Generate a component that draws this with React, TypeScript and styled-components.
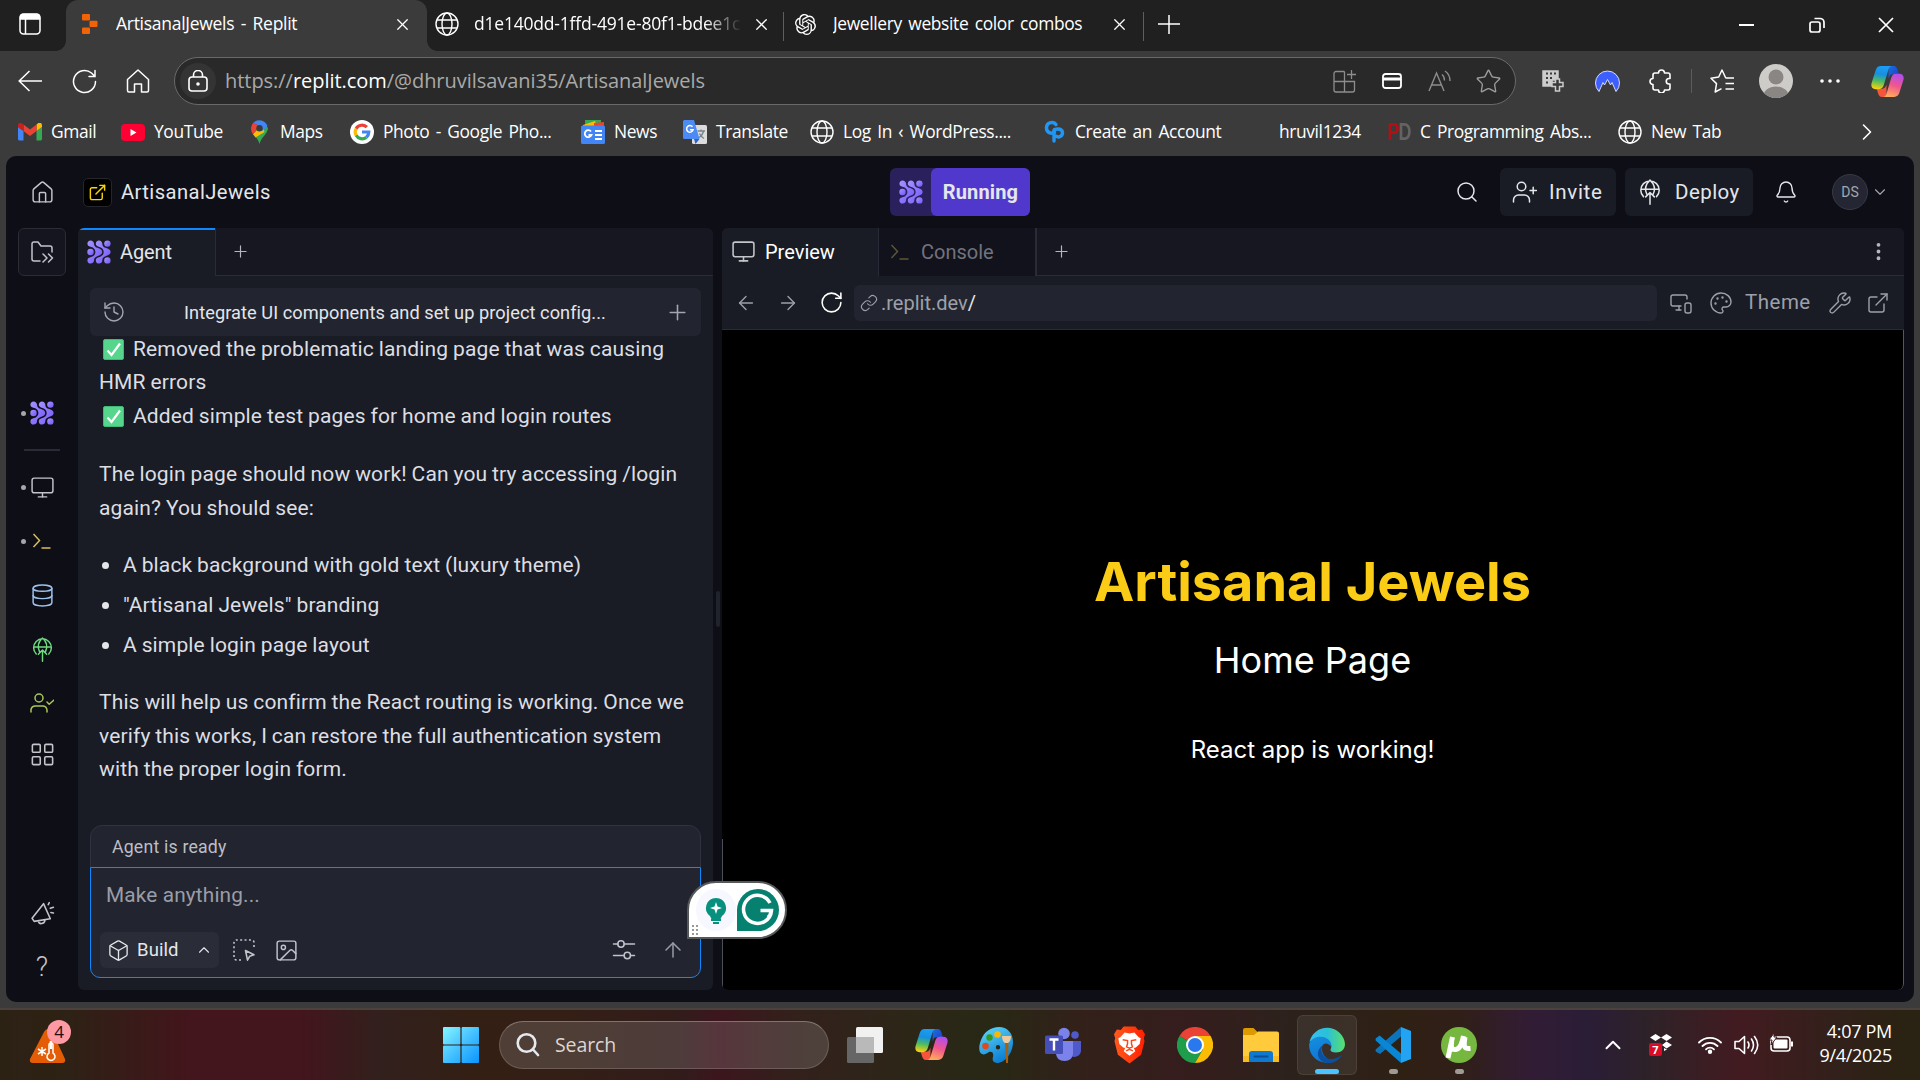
import React from "react";
import styled, { createGlobalStyle } from "styled-components";
import {
  ArrowLeft, ArrowRight, ArrowUp, Bell, Box, ChevronDown, ChevronRight, ChevronUp, Database, EllipsisVertical,
  ExternalLink, History, House, Image as ImageIcon, LayoutGrid, Link, Monitor, MonitorSmartphone, Palette, Plus,
  RotateCw, Search, Star, Wrench, X,
} from "lucide-react";
import { SiOpenai } from "react-icons/si";

const segoe = `"Open Sans", "Noto Sans", sans-serif`;
const plex = `Roboto, "Noto Sans", sans-serif`;

const Global = createGlobalStyle`
  * { box-sizing: border-box; }
  body { margin: 0; background: #3b3b3b; overflow: hidden; }
  svg { display: block; flex: none; }
`;

const Screen = styled.div`
  width: 1920px; height: 1080px; display: flex; flex-direction: column;
  background: #3b3b3b; color: #fff; font-family: ${segoe}; overflow: hidden;
`;
const Slot = styled.span<{ $w: number; $c?: string }>`
  width: ${p => p.$w}px; flex: none; display: flex; align-items: center; justify-content: center; color: ${p => p.$c || "inherit"};
`;
const Gap = styled.span<{ $w: number }>`width: ${p => p.$w}px; flex: none;`;
const Text = styled.span<{ $s: number; $ls?: number; $c?: string; $weight?: number }>`
  font-size: ${p => p.$s}px; letter-spacing: ${p => p.$ls || 0}px; color: ${p => p.$c || "inherit"};
  font-weight: ${p => p.$weight || 400}; white-space: pre; line-height: 1.3;
`;
const ChromeText = styled(Text)`word-spacing: 2.2px;`;

/* ---------- browser chrome ---------- */
const TabStrip = styled.div`height: 51px; flex: none; display: flex; background: #202020;`;
const TabMenu = styled.div`width: 66px; display: flex; align-items: center; justify-content: center; padding: 0 6px 4px 0;`;
const ActiveTab = styled.div`
  position: relative; width: 361px; padding: 0 9px 3px 11px; display: flex; align-items: center; background: #3b3b3b; border-radius: 12px 12px 0 0;
  &::before, &::after { content: ""; position: absolute; bottom: 0; width: 10px; height: 10px; }
  &::before { left: -10px; background: radial-gradient(circle at 0 0, #202020 9.5px, #3b3b3b 10px); }
  &::after { right: -10px; background: radial-gradient(circle at 100% 0, #202020 9.5px, #3b3b3b 10px); }
`;
const Tab = styled.div<{ $w: number; $l: number }>`
  width: ${p => p.$w}px; padding: 0 7px 3px ${p => p.$l}px; display: flex; align-items: center; position: relative;
  &::after { content: ""; position: absolute; right: 0; top: 12px; width: 1px; height: 29px; background: #5e5e5e; }
`;
const TabTitle = styled(ChromeText)<{ $fade?: boolean }>`
  flex: 1; overflow: hidden; padding-bottom: 1px;
  ${p => p.$fade && "mask-image: linear-gradient(90deg, #000 86%, transparent 100%);"}
`;
const WindowButtons = styled.div`margin-left: auto; display: flex; padding-bottom: 1px;`;

const Toolbar = styled.div`height: 60px; flex: none; display: flex; align-items: center; padding-left: 3px;`;
const AddressBar = styled.div`
  width: 1342px; height: 48px; margin-left: 9px; border: 1px solid #696969; border-radius: 24px; background: #292929;
  display: flex; align-items: center; padding: 0 3px 0 5px;
`;
const LockCircle = styled.span`width: 36px; height: 36px; border-radius: 50%; background: #343434; display: flex; align-items: center; justify-content: center;`;
const Url = styled(Text)`flex: 1; padding-left: 9px; color: #a9a9a9; b { color: #fff; font-weight: 400; }`;
const Divider = styled.span`width: 1px; height: 24px; background: #5c5c5c;`;
const Bookmarks = styled.div`height: 45px; flex: none; display: flex; align-items: center; padding: 0 25px 3px 18px;`;
const Bookmark = styled.div<{ $w: number }>`width: ${p => p.$w}px; flex: none; display: flex; align-items: center; gap: 9px;`;
const BookmarkLabel = styled(ChromeText)`padding-bottom: 2px;`;
const Favicon = styled.span`width: 24px; height: 24px; flex: none; display: flex; align-items: center; justify-content: center;`;
const PD = styled.span`font: 700 18px/18px "Liberation Sans", Arial, sans-serif; letter-spacing: -1px; transform: scaleY(1.3); color: #b50f16; i { font-style: normal; color: #636363; }`;

/* ---------- IDE ---------- */
const Ide = styled.main`
  height: 846px; flex: none; margin: 0 6px; background: #0e0e17; border-radius: 10px; overflow: hidden;
  display: flex; flex-direction: column; font-family: ${plex}; color: #e4e6ea;
`;
const IdeHeader = styled.header`height: 72px; flex: none; display: flex; align-items: center;`;
const AppIcon = styled.span`
  width: 29px; height: 29px; margin: 0 9px 0 5px; border: 1px solid #25252b; border-radius: 5px; background: #000; color: #f5d40e;
  display: flex; align-items: center; justify-content: center;
`;
const ProjectName = styled(Text)`width: 149px; flex: none;`;
const RunGroup = styled.div`width: 140px; height: 48px; flex: none; margin-left: 620px; display: flex; background: #2a205c; border-radius: 6px;`;
const RunLabel = styled.div`width: 101px; display: flex; align-items: center; justify-content: center; background: #5138cc; border-radius: 6px;`;
const HeaderButton = styled.div<{ $w: number; $gap: number }>`
  width: ${p => p.$w}px; height: 48px; flex: none; margin-right: 9px; background: #1a1c25; border-radius: 6px; display: flex; align-items: center; padding-left: 12px; gap: ${p => p.$gap}px;
`;
const Avatar = styled.span`width: 36px; height: 36px; border-radius: 50%; border: 1px solid #373944; background: #242733; display: flex; align-items: center; justify-content: center;`;
const IdeBody = styled.div`flex: 1; display: flex; padding-bottom: 12px;`;
const Rail = styled.nav`width: 72px; display: flex; flex-direction: column; align-items: center;`;
const RailItem = styled.div<{ $h: number; $c?: string; $dot?: boolean }>`
  position: relative; height: ${p => p.$h}px; width: 72px; display: flex; align-items: center; justify-content: center; color: ${p => p.$c || "#c3c5cb"};
  &::before { content: ""; position: absolute; left: 15px; width: 5px; height: 5px; border-radius: 50%; background: ${p => (p.$dot ? "#a5a7ae" : "transparent")}; }
`;
const HelpItem = styled(RailItem)`padding-top: 6px;`;
const FilesButton = styled.div`width: 48px; height: 48px; border: 1px solid #2a2c36; border-radius: 6px; background: #14151e; display: flex; align-items: center; justify-content: center;`;
const RailRule = styled.div`width: 36px; height: 2px; background: #292b36;`;
const Spacer = styled.div<{ $h?: number }>`${p => (p.$h ? `height: ${p.$h}px; flex: none;` : "flex: 1;")}`;

const Pane = styled.section<{ $w: number }>`
  width: ${p => p.$w}px; flex: none; background: #1a1c25; border-radius: 6px; overflow: hidden; display: flex; flex-direction: column;
`;
const PaneTabs = styled.div`height: 48px; flex: none; display: flex; background: #161720; border-bottom: 1px solid #292b36;`;
const PaneTab = styled.div<{ $w: number; $on?: boolean; $line?: boolean }>`
  width: ${p => p.$w}px; height: 48px; flex: none; display: flex; align-items: center; padding: 0 0 1px 9px; gap: 9px;
  background: ${p => (p.$on ? "#1a1c25" : "#11121b")}; border-right: ${p => (p.$on ? 1 : 2)}px solid #292b36;
  ${p => p.$line && "box-shadow: inset 0 2px #0f87ff;"}
`;
const Splitter = styled.div`width: 9px; display: flex; align-items: center; justify-content: center; &::after { content: ""; width: 4px; height: 36px; background: #20222c; border-radius: 2px; }`;
const Chat = styled.div`flex: 1; display: flex; flex-direction: column; padding: 12px 12px;`;
const SessionBar = styled.div`height: 48px; flex: none; border-radius: 6px; background: #22252f; display: flex; align-items: center; color: #a3a6af;`;
const SessionTitle = styled(Text)`flex: 1; text-align: center; color: #e4e6ea; padding-top: 2px;`;
const Messages = styled.div`flex: 1; margin-top: -3.5px; padding: 0 8px 0 9px; font-size: 21px; line-height: 33.75px; letter-spacing: 0.14px; word-spacing: -0.55px; color: #dcdee3; white-space: pre;`;
const Para = styled.p<{ $mb?: number }>`margin: 0 0 ${p => (p.$mb === undefined ? 23.4 : p.$mb)}px;`;
const CheckLine = styled.div`display: flex; align-items: center; gap: 9px; padding-left: 4px;`;
const CheckBox = styled.span`width: 21px; height: 21px; border-radius: 2px; background: #56d58d; border: 1px solid #41b877; display: flex; align-items: center; justify-content: center; color: #fff;`;
const Bullets = styled.ul`
  list-style: none; margin: 0 0 23.500px; padding: 0; display: flex; flex-direction: column; gap: 6.3px;
  li { display: flex; align-items: center; gap: 14px; padding-left: 3px; }
  li::before { content: ""; width: 7px; height: 7px; border-radius: 50%; background: #e4e6ea; }
`;
const StatusBar = styled.div`height: 43px; flex: none; margin-bottom: -1px; border: 1px solid #30333f; border-radius: 12px 12px 0 0; background: #22252f; display: flex; align-items: center; padding: 2px 0 0 21px; color: #bcbec6;`;
const Composer = styled.div`height: 111px; flex: none; border: 1px solid #0f87ff; border-radius: 0 0 10px 10px; background: #22252f; padding: 11px 3px 9px 9px; display: flex; flex-direction: column; justify-content: space-between;`;
const Placeholder = styled(Text)`padding: 3px 0 0 6px; color: #9a9da7;`;
const ComposerRow = styled.div`display: flex; align-items: center; color: #c0c3ca; height: 36px;`;
const BuildChip = styled.div`width: 119px; height: 36px; flex: none; border-radius: 6px; background: #2a2c38; display: flex; align-items: center; padding-left: 7px; gap: 7px; color: #e4e6ea;`;

const PreviewBar = styled.div`height: 54px; flex: none; display: flex; align-items: center; padding-left: 3px; border-bottom: 1px solid #292b36; color: #9da0aa;`;
const PreviewUrl = styled.div`width: 803px; height: 36px; flex: none; border-radius: 6px; background: #22252f; display: flex; align-items: center; padding-left: 6px; gap: 3px; margin-right: 6px;`;
const Frame = styled.div`
  position: relative; flex: 1; background: #000; border-right: 1px solid #55575e; border-radius: 0 0 6px 6px; display: flex; flex-direction: column; align-items: center; font-family: Inter, sans-serif;
  &::before { content: ""; position: absolute; left: 0; top: 509px; bottom: 3px; width: 1px; background: #4c4e55; }
`;
const Brand = styled.h1`margin: 219px 0 0; font-size: 54px; line-height: 66px; font-weight: 700; letter-spacing: 0; color: #facc15;`;
const PageName = styled.p<{ $s: number; $mt: number }>`margin: ${p => p.$mt}px 0 0; font-size: ${p => p.$s}px; line-height: 1.5; color: #fff;`;

const Assistant = styled.div`
  position: absolute; left: 687px; top: 881px; width: 100px; height: 58px; border: 2px solid #56585a; border-radius: 29px 29px 29px 0; background: #fff;
`;

/* ---------- taskbar ---------- */
const Taskbar = styled.footer`
  flex: 1; margin-top: 6px; border-top: 2px solid #4b413d; display: flex; align-items: center; position: relative; padding-bottom: 1px;
  background: linear-gradient(90deg, #2c2214 0, #2e2115 70px, #43151c 190px, #43151c 300px, #32201d 380px, #331f14 470px, #331f16 570px, #321c1b 680px, #3c161d 720px, #33201c 790px, #2d2618 900px, #282815 990px, #33201a 1090px, #351d1d 1190px, #2c221c 1290px, #2f2014 1400px, #301f18 1460px, #321c35 1530px, #2a1d36 1590px, #2e2228 1650px, #421b20 1740px, #33201b 1830px, #2a2213 1900px);
`;
const Weather = styled.div`position: relative; width: 48px; height: 44px; flex: none; margin-left: 25px;`;
const Badge = styled.span`position: absolute; left: 22px; top: -3px; width: 24px; height: 24px; border-radius: 50%; background: #ff99a4; color: #1c1010; font-size: 17px; line-height: 24px; text-align: center;`;
const SearchPill = styled.div`
  width: 330px; height: 48px; flex: none; border-radius: 24px; border: 1px solid #ffffff28; border-top-color: #ffffff48; background: #ffffff24; display: flex; align-items: center; padding-left: 15px; gap: 15px; color: #dcd6d2;
`;
const TaskButton = styled.div<{ $on?: boolean; $dot?: boolean }>`
  width: 66px; height: 60px; position: relative; display: flex; align-items: center; justify-content: center;
  &::before { content: ""; position: absolute; inset: 0 3px; border-radius: 6px; ${p => p.$on && "background: #ffffff12; border: 1px solid #ffffff14;"} }
  &::after { content: ""; position: absolute; bottom: 1px; height: 5px; border-radius: 3px; width: ${p => (p.$on ? 24 : p.$dot ? 9 : 0)}px; background: ${p => (p.$on ? "#4cc2ff" : "#a09a97")}; }
  svg { position: relative; }
`;
const Tray = styled.div`margin-left: auto; display: flex; align-items: center;`;
const DropboxBadge = styled.span`position: absolute; left: -1px; top: 9px; width: 13px; height: 13px; background: #d90b26; border-radius: 2px; font: 700 11px/13px "Open Sans", sans-serif; text-align: center;`;
const DropboxSlot = styled.span`position: relative; width: 22px; height: 22px; margin: 0 20px 0 24px;`;
const Clock = styled.div`width: 93px; text-align: right; font-size: 18px; line-height: 24px; letter-spacing: -0.3px; padding: 0 28px 3px 0; box-sizing: content-box;`;

/* ---------- drawings ---------- */
const Globe = ({ s = 24 }: { s?: number }) => (
  <svg width={s} height={s} viewBox="0 0 24 24" fill="none" stroke="#fff" strokeWidth="1.4"><circle cx="12" cy="12" r="11" /><ellipse cx="12" cy="12" rx="5" ry="11" /><path d="M2 8h20M2 16h20" /></svg>
);
const AgentMark = ({ s = 24 }: { s?: number }) => (
  <svg width={s} height={s} viewBox="0 0 24 24">
    <defs><linearGradient id="ag" x1="0" y1="0" x2="1" y2="1"><stop stopColor="#a694ff" /><stop offset="1" stopColor="#7357fb" /></linearGradient></defs>
    <g fill="url(#ag)">
      <path d="M3.6.4C5.500.4 6.900 1.900 7 3.500c.1 2.700 1.300 3.500 3.200 4.300 2.700 1 5 1.700 5 4.200s-2.300 3.200-5 4.200C8.300 17 7.100 17.800 7 20.500c-.1 1.600-1.500 3.100-3.400 3.100S.4 22.200.4 20.400c0-1.700 1.200-2.900 3-3.200 2.500-.4 5-2.200 5-5.200s-2.500-4.800-5-5.200C1.600 6.500.4 5.300.4 3.600S1.700.4 3.600.4z" />
      <path d="M12 .4c1.900 0 3.200 1.500 3.300 3.100.1 2.700 1 3.500 3.100 4.300 2.600.9 5.200 1.800 5.200 4.200s-2.600 3.300-5.200 4.200c-2.100.8-3 1.600-3.100 4.300-.1 1.600-1.400 3.100-3.300 3.100s-3.200-1.400-3.200-3.200 1.200-2.700 2.900-3.200c2.800-.8 5-2.200 5-5.200s-2.200-4.400-5-5.200C10 6.300 8.800 5.400 8.800 3.600S10.100.4 12 .4z" />
      <circle cx="3.500" cy="12" r="3.200" /><circle cx="20.400" cy="3.600" r="3.200" /><circle cx="20.400" cy="20.400" r="3.200" />
    </g>
  </svg>
);
const DeployIcon = ({ s = 24 }: { s?: number }) => (
  <svg width={s} height={s} viewBox="0 0 24 24" fill="none" stroke="currentColor" strokeWidth="1.4" strokeLinecap="round" strokeLinejoin="round">
    <path d="M6 16.300A8.500 8.500 0 1 1 18 16.300M3.800 9.500h16.400M9.200 14.300c-2-4.300-1.500-9.500 2.800-13.300 4.300 3.800 4.800 9 2.800 13.300M12 23.300V12.500M8 16.500l4-4 4 4" />
  </svg>
);
const TerminalIcon = () => <svg width="24" height="24" viewBox="0 0 24 24" fill="none" stroke="currentColor" strokeWidth="1.5"><path d="M3.500 5l6 6.500-6 6.500M11.500 19h9" /></svg>;
const UserCheck = () => <svg width="24" height="24" viewBox="0 0 24 24" fill="none" stroke="currentColor" strokeWidth="1.5" strokeLinecap="round" strokeLinejoin="round"><circle cx="9" cy="7" r="4" /><path d="M1 21v-2.500A4.500 4.500 0 0 1 5.500 15h7a4.500 4.500 0 0 1 4.500 4V21M17 11l2.200 2.200L24 9" /></svg>;
const InviteIcon = () => <svg width="25" height="24" viewBox="0 0 25 24" fill="none" stroke="currentColor" strokeWidth="1.500" strokeLinecap="round" strokeLinejoin="round"><circle cx="9.500" cy="6.500" r="4.300" /><path d="M1.500 22v-2a5 5 0 0 1 5-5h6a5 5 0 0 1 5 5v2M18 10.500h6.500M21.200 7.200v6.500" /></svg>;
const SlidersIcon = () => <svg width="24" height="22" viewBox="0 0 24 22" fill="none" stroke="currentColor" strokeWidth="1.500" strokeLinecap="round"><path d="M1.500 5H6M12 5h10.500M1.500 16.500H12M18.500 16.500h4" /><circle cx="9" cy="5" r="3.200" /><circle cx="15.300" cy="16.500" r="3.200" /></svg>;
const SelectIcon = () => <svg width="24" height="24" viewBox="0 0 24 24" fill="none" stroke="currentColor" strokeWidth="1.600" strokeLinejoin="round"><path d="M9 22H4.500A2.500 2.500 0 0 1 2 19.500v-15A2.500 2.500 0 0 1 4.500 2h15A2.500 2.500 0 0 1 22 4.500V10" strokeDasharray="2 2.400" /><path d="M13.500 12.500l8.500 4.300-4.200 1.400-2.300 4z" /></svg>;
const FolderIcon = () => <svg width="24" height="24" viewBox="0 0 24 24" fill="none" stroke="#c3c5cb" strokeWidth="1.5" strokeLinejoin="round" strokeLinecap="round"><path d="M10 21H4a2 2 0 0 1-2-2V4a2 2 0 0 1 2-2h4l3 4h9a2 2 0 0 1 2 2v4M13 14l4 4-4 4M18.500 14l4 4-4 4" /></svg>;
const Megaphone = () => <svg width="25" height="25" viewBox="0 0 24 24" fill="none" stroke="currentColor" strokeWidth="1.500" strokeLinecap="round" strokeLinejoin="round"><path d="M2 17.500L13 3.500l6.500 14.500-15.500 2.500zM8 20c.4 3.800 5.600 3.600 6.600-1M17.500 4.500l1-2M19.500 8l3-1M20 12l2.500.5" /></svg>;
const Copilot = ({ s = 32, id }: { s?: number; id: string }) => (
  <svg width={s} height={s} viewBox="0 0 32 32">
    <defs>
      <linearGradient id={id + "a"} x1=".5" y1="0" x2=".35" y2="1"><stop stopColor="#1c9df5" /><stop offset=".35" stopColor="#168fe0" /><stop offset=".65" stopColor="#4cbb62" /><stop offset="1" stopColor="#ffd20a" /></linearGradient>
      <linearGradient id={id + "b"} x1=".7" y1="0" x2=".4" y2="1"><stop stopColor="#b04dee" /><stop offset=".5" stopColor="#f0568f" /><stop offset="1" stopColor="#ffa95a" /></linearGradient>
      <linearGradient id={id + "c"} x1="0" y1="0" x2="1" y2="1"><stop stopColor="#1d6fe0" /><stop offset="1" stopColor="#1b3cc4" /></linearGradient>
    </defs>
    <path d="M17 1h5c2 0 3 1.500 3.600 3.300L27 9h-6c-2.500 0-3 1.500-4 4z" fill={`url(#${id}c)`} />
    <path d="M15 31h-4.500c-2 0-3-1.500-3.600-3.300L5.500 23H11c2.500 0 3-1.500 4-4z" fill="#f4553c" />
    <path d="M9.500 1H20c-2 .3-2.700 2-3.300 4l-4.300 14.500c-.8 2.500-2 4-4.600 4H4.500C1 23.500-.3 21 .6 17.500L4.500 5C5.300 2.500 7 1 9.500 1z" fill={`url(#${id}a)`} />
    <path d="M22.500 31H12c2-.3 2.700-2 3.300-4l4.300-14.500c.8-2.500 2-4 4.600-4h3.300c3.500 0 4.800 2.500 3.900 6L27.500 27c-.8 2.500-2.500 4-5 4z" fill={`url(#${id}b)`} />
  </svg>
);
const ReplitLogo = () => <svg width="17" height="20" viewBox="0 0 17 20" fill="#f26207"><rect x="1" width="8" height="6.500" rx="1" /><rect x="8.500" y="6.800" width="8" height="6.300" rx="1" /><rect x="1" y="13.500" width="8" height="6.500" rx="1" /></svg>;
const Gmail = () => <svg width="24" height="18" viewBox="0 0 24 18"><path fill="#4285f4" d="M1.600 17.500H5.500V8L0 4v12c0 .9.700 1.500 1.600 1.500z" /><path fill="#34a853" d="M18.500 17.500h3.900c.9 0 1.600-.7 1.600-1.500V4l-5.500 4z" /><path fill="#fbbc04" d="M18.500 1.600V8L24 4V2.200c0-2-2.400-3.200-4-2z" /><path fill="#ea4335" d="M5.500 8V1.600l6.500 5 6.500-5V8L12 13z" /><path fill="#c5221f" d="M0 2.200V4l5.500 4V1.600L4 .400C2.400-.8 0 .3 0 2.200z" /></svg>;
const YouTube = () => <svg width="24" height="17" viewBox="0 0 24 17"><rect width="24" height="17" rx="4" fill="#ff0033" /><path d="M9.500 5v7l6-3.500z" fill="#fff" /></svg>;
const Maps = () => <svg width="17" height="24" viewBox="0 0 17 24"><path fill="#34a853" d="M8.500 24c1-4 2.500-5.500 4.500-8 2.300-3 4-5 4-8L13 3 2 14c3 3.500 5.500 5.500 6.500 10z" /><path fill="#fbbc04" d="M2 14.300L11 4l2.500 8L4.500 17.500z" /><path fill="#4285f4" d="M2.300 2.800A8.500 8.500 0 0 1 16.500 6L11 11 8 6z" /><path fill="#ea4335" d="M2.300 2.800C-1 7-.3 11.500 2 14.300L9 6z" /><circle cx="8.500" cy="8.300" r="3.200" fill="#3b3b3b" /></svg>;
const Google = () => <svg width="24" height="24" viewBox="0 0 24 24"><circle cx="12" cy="12" r="12" fill="#fff" /><g fill="none" strokeWidth="3.200"><path stroke="#ea4335" d="M6.100 8.700A6.800 6.800 0 0 1 16.900 7.200" /><path stroke="#fbbc05" d="M6.100 15.300a6.800 6.800 0 0 1 0-6.600" /><path stroke="#34a853" d="M16.400 17.200a6.800 6.800 0 0 1-10.300-1.900" /><path stroke="#4285f4" d="M12 12h6.800a6.800 6.800 0 0 1-2.400 5.200" /></g></svg>;
const News = () => <svg width="24" height="24" viewBox="0 0 24 24"><path fill="#34a853" d="M4 0h16v6H4z" /><path fill="#fbbc04" d="M2 5l12-4 3 7H2z" /><path fill="#ea4335" d="M13 3l10-1v6H13z" /><rect y="5.500" width="24" height="18.500" rx="1.500" fill="#4285f4" /><path d="M10 11.500a3.500 3.500 0 1 0 .5 3.500H7.500M14 11h7M14 15h7M14 19h7" fill="none" stroke="#fff" strokeWidth="1.800" /></svg>;
const Translate = () => <svg width="24" height="24" viewBox="0 0 24 24"><rect x="9" y="5" width="15" height="19" rx="1.500" fill="#dcdcdc" /><path d="M1.500 0H11l5.500 19H1.500A1.500 1.500 0 0 1 0 17.500v-16A1.500 1.500 0 0 1 1.500 0z" fill="#4c8bf5" /><path d="M11 19h5.500L12.500 24z" fill="#3060c8" /><path d="M9.500 6.800a3.300 3.300 0 1 0 .6 3H6.900" fill="none" stroke="#fff" strokeWidth="1.500" /><path d="M14.500 11h7.500M18 9.500V11M20.500 11.500c-1 3-2.500 5-4.500 6M16.500 13.500c1 2 2.500 4 4.500 5" stroke="#76828e" strokeWidth="1.300" fill="none" /></svg>;
const CP = () => <svg width="21" height="24" viewBox="0 0 22 24" fill="none" stroke="#2196f3" strokeWidth="3.600" strokeLinecap="round"><path d="M12.500 4.200C10.500.8 3 1.200 2.600 7.200c-.3 5.500 5.400 7.300 8.300 5V9.500" /><path d="M10.500 21.500V10.500c0-2 8-2.700 8.800 1.500.6 4.500-3.800 6-6 4.500" /></svg>;
const Brave = () => <svg width="31" height="38" viewBox="0 0 32 38"><defs><linearGradient id="br"><stop stopColor="#ff5a1f" /><stop offset="1" stopColor="#ff2000" /></linearGradient></defs><path fill="url(#br)" d="M10 0h12l3 3.500 4-.5 3 5-1.200 4 .7 3-3.500 14L16 38 4 29 .5 15l.7-3L0 8l3-5 4 .5z" /><path fill="#fff" d="M16 7l5-1 4.500 5 2 1-1 6-4 3.500-2 .5 1.500 3.500-6 4.500-6-4.500L11.500 22l-2-.5L5.500 18l-1-6 2-1L11 6z" /><path d="M9 13.500l5 1v3L13 21l3 1.200 3-1.200-1-3.500v-3l5-1M12.500 25l3.500-1.500 3.500 1.500" fill="none" stroke="#ff4517" strokeWidth="1.500" /></svg>;
const Chrome = () => <svg width="36" height="36" viewBox="0 0 36 36"><path fill="#ea4335" d="M18 18L2.400 9A18 18 0 0 1 33.600 9z" /><path fill="#1e9e4a" d="M18 18l7.800 4.500L18 36A18 18 0 0 1 2.400 9z" /><path fill="#fbbc05" d="M18 9h15.600A18 18 0 0 1 18 36l7.800-13.500z" /><circle cx="18" cy="18" r="9" fill="#fff" /><circle cx="18" cy="18" r="7" fill="#2a78ee" /></svg>;
const Explorer = () => <svg width="36" height="34" viewBox="0 0 36 34"><path fill="#dc9a00" d="M0 2a2 2 0 0 1 2-2h8.500l4 4v8H0z" /><path fill="#ffcb3d" d="M0 7h11l4-3.500h19a2 2 0 0 1 2 2V34H0z" /><path fill="#f9bb20" d="M0 28h36v6H0z" /><path fill="#0f78d0" d="M6 34v-8a3 3 0 0 1 3-3h18a3 3 0 0 1 3 3v8z" /><path stroke="#0a4f94" strokeWidth="2" strokeLinecap="round" d="M11.500 28.500h13" /></svg>;
const Edge = () => <svg width="36" height="36" viewBox="0 0 36 36"><defs><linearGradient id="e1"><stop stopColor="#35c1f1" /><stop offset=".5" stopColor="#2bc0d8" /><stop offset="1" stopColor="#58e06a" /></linearGradient><linearGradient id="e2" x1="0" y1="0" x2=".4" y2="1"><stop stopColor="#1490df" /><stop offset="1" stopColor="#1173d4" /></linearGradient></defs><path fill="url(#e1)" d="M.5 15A18 18 0 0 1 36 17c0 5-3.500 8.500-9 8.500-4 0-6-1.500-5.500-3C24 18 20 12 12 12 6 12 2 14 .5 15z" /><path fill="url(#e2)" d="M.2 17C2 12 7 9.500 12 9.800c7 .4 11 5.200 10.500 10-3-4-8-5-9.500 0-1 8 5 13 10 13.500 2 .3 1 1.500-1 2C9 38-.8 28 .2 17z" /><path fill="#0b4f9f" d="M13.500 18.500c-3 6 1 13.500 8.500 13.500 5 0 8.500-2.500 10.800-4.300C30 34 23 37 17 35.800 8 34 6 24 13.500 18.500z" /></svg>;
const VsCode = () => <svg width="36" height="36" viewBox="0 0 36 36"><path fill="#0a74bd" d="M.6 22.500L26 0v9.500L5 27 .6 24.500z" /><path fill="#0b86d2" d="M.6 11.500l4-3L26 26.500V36L.6 13.500z" /><path fill="#23a4f2" d="M26 0l10 4v28l-10 4z" /></svg>;
const UTorrent = () => <svg width="36" height="36" viewBox="0 0 36 36"><circle cx="18" cy="18" r="18" fill="#76b83f" /><path d="M11.500 10L7 31M10.800 15c-1.500 6 .5 8 4 7.500 4.500-.5 6.500-7 7.700-13.500M24 10c-1.500 9-1.500 12 5.500 11.500" fill="none" stroke="#fff" strokeWidth="5" strokeLinecap="butt" /></svg>;
const Paint = () => <svg width="36" height="36" viewBox="0 0 36 36"><defs><linearGradient id="pt" x1="0" y1="0" x2=".5" y2="1"><stop stopColor="#63dafb" /><stop offset="1" stopColor="#0c80d4" /></linearGradient></defs><path fill="url(#pt)" d="M20 0c8 0 14 6 14 15 0 11-8 21-16 21-4 0-5-3-4-6 1-4-1-6-4-5-3 2-5 3-7 2-4-2-3-9-1-14C5 5 12 0 20 0zm-1 18a2.200 2.200 0 1 0 0 4.400 2.200 2.200 0 0 0 0-4.400z" /><circle cx="6.500" cy="19" r="3.300" fill="#dd4a1d" /><circle cx="10.500" cy="10.500" r="3.200" fill="#36971b" /><circle cx="18.500" cy="7.500" r="3.300" fill="#fbb800" /><path fill="#f0c998" d="M23 9h9c0 4-1.500 6-3 7h-3c-2-1-3-4-3-7z" /><path fill="#a9600e" d="M26 16h3.500L29 36h-2z" /></svg>;
const Teams = () => <svg width="36" height="36" viewBox="0 0 36 36"><circle cx="30" cy="8" r="3.800" fill="#5059c9" /><circle cx="19" cy="6.500" r="5.800" fill="#7b83eb" /><path fill="#5059c9" d="M25 14h11v9.500a6.500 6.500 0 0 1-11 4.500z" /><path fill="#7b83eb" d="M11 14h17v12c0 5-3.500 8-8.500 8S11 31 11 26z" /><rect y="8.500" width="18" height="18.500" rx="1.500" fill="#464eb8" /><path d="M4.500 12.500h9M9 12.500v11" stroke="#fff" strokeWidth="2.400" /></svg>;
const TaskView = () => <svg width="36" height="36" viewBox="0 0 36 36"><rect x="9" width="27" height="26" rx="1.500" fill="#f1f1f1" /><rect y="10" width="27" height="26" rx="1.500" fill="#666" /><path d="M9 10h18v16H9z" fill="#b9b9b9" /></svg>;
const Windows = () => <svg width="36" height="36" viewBox="0 0 36 36"><defs><linearGradient id="wn" x1="0" y1="0" x2="36" y2="36" gradientUnits="userSpaceOnUse"><stop stopColor="#86f5ff" /><stop offset=".5" stopColor="#46c2ff" /><stop offset="1" stopColor="#0a94ff" /></linearGradient></defs><g fill="url(#wn)"><rect width="17.400" height="17.400" rx="1" /><rect x="18.600" width="17.400" height="17.400" rx="1" /><rect y="18.600" width="17.400" height="17.400" rx="1" /><rect x="18.600" y="18.600" width="17.400" height="17.400" rx="1" /></g></svg>;

const bookmarks: [React.ReactNode, string, number][] = [
  [<Gmail />, "Gmail", 103], [<YouTube />, "YouTube", 126], [<Maps />, "Maps", 103], [<Google />, "Photo - Google Pho...", 231],
  [<News />, "News", 102], [<Translate />, "Translate", 127], [<Globe />, "Log In ‹ WordPress....", 232], [<CP />, "Create an Account", 204],
  [null, "hruvil1234", 141], [<PD>P<i>D</i></PD>, "C Programming Abs...", 231], [<Globe />, "New Tab", 140],
];

const BrowserChrome = () => (
  <>
    <TabStrip>
      <TabMenu><svg width="22" height="22" viewBox="0 0 22 22" fill="none" stroke="#fff" strokeWidth="1.500"><rect x="1" y="1" width="20" height="20" rx="3.500" /><path d="M6.500 6v15" /><path d="M1.500 3.500Q1.500 1.500 4 1.500h14q2.500 0 2.500 2V6h-19z" fill="#fff" /></svg></TabMenu>
      <ActiveTab><Slot $w={24}><ReplitLogo /></Slot><Gap $w={15} /><TabTitle $s={17.500} $ls={-0.28}>ArtisanalJewels - Replit</TabTitle><Slot $w={32}><X size={19} strokeWidth={1.600} /></Slot></ActiveTab>
      <Tab $w={357} $l={8}><Globe /><Gap $w={15} /><TabTitle $fade $s={17.500} $ls={-0.2}>d1e140dd-1ffd-491e-80f1-bdee1c</TabTitle><Gap $w={3} /><Slot $w={32}><X size={19} strokeWidth={1.600} /></Slot></Tab>
      <Tab $w={360} $l={11}><SiOpenai size={21} /><Gap $w={17} /><TabTitle $s={17.400} $ls={-0.35}>Jewellery website color combos</TabTitle><Slot $w={35}><X size={19} strokeWidth={1.600} /></Slot></Tab>
      <Slot $w={50}><svg width="22" height="22"><path d="M0 9h22M11 -2v21" stroke="#fff" strokeWidth="1.500" /></svg></Slot>
      <WindowButtons>
        <Slot $w={70}><svg width="16" height="16"><path d="M0 8h15" stroke="#fff" strokeWidth="2" /></svg></Slot>
        <Slot $w={69}><svg width="16" height="16" viewBox="0 0 16 16" fill="none" stroke="#fff" strokeWidth="1.700"><rect x="1" y="5" width="10" height="10" rx="2" /><path d="M5.500 1.500H11a4 4 0 0 1 4 4V11" /></svg></Slot>
        <Slot $w={69}><svg width="16" height="16"><path d="M1 1l14 14M15 1L1 15" stroke="#fff" strokeWidth="1.700" /></svg></Slot>
      </WindowButtons>
    </TabStrip>
    <Toolbar>
      <Slot $w={54}><svg width="24" height="22" viewBox="0 0 24 22" fill="none" stroke="#fff" strokeWidth="1.500"><path d="M11.500 1L1.200 11l10.300 10M1.200 11H24" /></svg></Slot>
      <Slot $w={54}><svg width="25" height="25" viewBox="0 0 25 25" fill="none" stroke="#fff" strokeWidth="1.500" strokeLinecap="round"><path d="M23.500 12.500A11 11 0 1 1 19.500 4l3 3M23 1.500V7.500H17" /></svg></Slot>
      <Slot $w={54}><svg width="24" height="24" viewBox="0 0 24 24" fill="none" stroke="#fff" strokeWidth="1.500" strokeLinejoin="round"><path d="M1.500 10.500L12 1l10.500 9.500V21.500a1.500 1.500 0 0 1-1.500 1.500H15.500V15h-7v8H3a1.500 1.500 0 0 1-1.500-1.500z" /></svg></Slot>
      <AddressBar>
        <LockCircle><svg width="20" height="22" viewBox="0 0 20 22" fill="none" stroke="#fff" strokeWidth="1.600"><rect x="1" y="7" width="18" height="14" rx="3" /><path d="M5.500 7V5a4.500 4.500 0 0 1 9 0v2" /><circle cx="10" cy="14" r="1" fill="#fff" /></svg></LockCircle>
        <Url $s={20} $ls={-0.04}>https://<b>replit.com</b>/@dhruvilsavani35/ArtisanalJewels</Url>
        <Slot $w={48} $c="#8d8d8d"><svg width="23" height="23" viewBox="0 0 23 23" fill="none" stroke="currentColor" strokeWidth="1.300"><path d="M11.500 1.500H3A2 2 0 0 0 1 3.500V20a2 2 0 0 0 2 2h16.500a2 2 0 0 0 2-2v-8.500H1M11.500 1.500V22M18.500 0v9M14 4.500h9" /></svg></Slot>
        <Slot $w={48}><svg width="20" height="16" viewBox="0 0 20 16"><rect x="1" y="1" width="18" height="14" rx="2.500" fill="none" stroke="#fff" strokeWidth="1.800" /><path d="M1 4.500h18v3H1z" fill="#fff" /></svg></Slot>
        <Slot $w={48} $c="#8d8d8d"><svg width="24" height="22" viewBox="0 0 24 22" fill="none" stroke="currentColor" strokeWidth="1.400"><path d="M1 21L8.500 3 16 21M3.500 15h10M14 4.500c2 1.500 2.500 3.500 2.500 6M17 1c3.500 2.500 5 6 5 10" /></svg></Slot>
        <Slot $w={48} $c="#9d9d9d"><Star size={27} strokeWidth={1.200} /></Slot>
      </AddressBar>
      <Gap $w={8} />
      <Slot $w={57} $c="#ccc"><svg width="22" height="22" viewBox="0 0 22 22" fill="none" stroke="currentColor" strokeWidth="1.500"><path d="M1 1h15v9h-6v6H1z" fill="#ccc" /><path d="M4 3.500h2M8 3.500h2M12 3.500h2M4 8h2M8 8h2M4 12.500h2" stroke="#3b3b3b" strokeWidth="2" /><path d="M13.500 9h4v3.500H21v4h-3.500V21h-4v-4.500H10v-4h3.500z" fill="#3b3b3b" /></svg></Slot>
      <Slot $w={53}><svg width="25" height="22" viewBox="0 0 25 22"><path d="M4 21.500A12 12 0 1 1 21 21.500L17 12.500l-1.500 2.500L12.500 9.500 9.500 15 8 12.500z" fill="#3e5fff" stroke="#e8eaff" strokeWidth=".9" /></svg></Slot>
      <Slot $w={54}><svg width="24" height="24" viewBox="0 0 24 24" fill="none" stroke="#fff" strokeWidth="1.600" strokeLinejoin="round"><path d="M6 4h3.500a3 3 0 0 1 6 0H19q2 0 2 2v3.500h-1a2.700 2.700 0 0 0 0 5.500h1v4q0 2-2 2h-3.500a3 3 0 0 1-6 0H6q-2 0-2-2v-3.500a3 3 0 0 1 0-6V6q0-2 2-2z" /></svg></Slot>
      <Slot $w={7}><Divider /></Slot>
      <Slot $w={54}><svg width="25" height="24" viewBox="0 0 25 24" fill="none" stroke="#fff" strokeWidth="1.500" strokeLinejoin="round"><path d="M16 8.500h-.5L12 1 8.700 8 1 9.200l5.500 5.400L5.200 23l6.300-3.400M15.500 9H24M15.500 14.500H24M15.500 20H24" /></svg></Slot>
      <Slot $w={54}><svg width="34" height="34" viewBox="0 0 34 34"><defs><clipPath id="av"><circle cx="17" cy="17" r="17" /></clipPath></defs><g clipPath="url(#av)"><path fill="#ceccc8" d="M0 0h34v34H0z" /><circle cx="17" cy="13" r="7.500" fill="#8a8683" /><ellipse cx="17" cy="33" rx="13" ry="10.500" fill="#8a8683" /></g></svg></Slot>
      <Slot $w={54}><svg width="20" height="4" fill="#fff"><circle cx="2" cy="2" r="1.800" /><circle cx="10" cy="2" r="1.800" /><circle cx="18" cy="2" r="1.800" /></svg></Slot>
      <Slot $w={60}><Copilot id="ct" s={33} /></Slot>
    </Toolbar>
    <Bookmarks>
      {bookmarks.map(([icon, label, w]) => <Bookmark key={label} $w={w}><Favicon>{icon}</Favicon><BookmarkLabel $s={17.400} $ls={-0.38}>{label}</BookmarkLabel></Bookmark>)}
      <Gap $w={95} /><ChevronRight size={28} strokeWidth={1.400} />
    </Bookmarks>
  </>
);

const SideRail = () => (
  <Rail>
    <FilesButton><FolderIcon /></FilesButton>
    <Spacer $h={107} />
    <RailItem $h={60} $dot><AgentMark /></RailItem>
    <Spacer $h={6} /><RailRule /><Spacer $h={9} />
    <RailItem $h={54} $dot><Monitor size={25} strokeWidth={1.400} /></RailItem>
    <RailItem $h={54} $dot $c="#d9bd57"><TerminalIcon /></RailItem>
    <RailItem $h={54} $c="#9dc2ee"><Database size={25} strokeWidth={1.400} /></RailItem>
    <RailItem $h={54} $c="#6fdc80"><DeployIcon s={25} /></RailItem>
    <RailItem $h={54} $c="#a8c757"><UserCheck /></RailItem>
    <RailItem $h={48}><LayoutGrid size={27} strokeWidth={1.400} /></RailItem>
    <Spacer />
    <RailItem $h={54}><Megaphone /></RailItem>
    <HelpItem $h={51}><Text $s={27} $weight={300}>?</Text></HelpItem>
  </Rail>
);

const CheckMark = () => <CheckBox><svg width="16" height="15" viewBox="0 0 16 15" fill="none" stroke="#fff" strokeWidth="2.200"><path d="M1.500 8.500l4 4.500L14 1.500" /></svg></CheckBox>;

const AgentPane = () => (
  <Pane $w={635}>
    <PaneTabs>
      <PaneTab $w={138} $on $line><AgentMark /><Text $s={20} $ls={-0.1}>Agent</Text></PaneTab>
      <Slot $w={48} $c="#b4b6bd"><Plus size={19} strokeWidth={1.500} /></Slot>
    </PaneTabs>
    <Chat>
      <SessionBar><Slot $w={47}><History size={24} strokeWidth={1.400} /></Slot><SessionTitle $s={18.200} $ls={0.06}>Integrate UI components and set up project config...</SessionTitle><Slot $w={48}><Plus size={25} strokeWidth={1.500} /></Slot></SessionBar>
      <Messages>
        <CheckLine><CheckMark /><span>Removed the problematic landing page that was causing</span></CheckLine>
        <Para $mb={0}>HMR errors</Para>
        <CheckLine><CheckMark /><span>Added simple test pages for home and login routes</span></CheckLine>
        <Spacer $h={24} />
        <Para>{"The login page should now work! Can you try accessing /login\nagain? You should see:"}</Para>
        <Bullets><li>A black background with gold text (luxury theme)</li><li>"Artisanal Jewels" branding</li><li>A simple login page layout</li></Bullets>
        <Para>{"This will help us confirm the React routing is working. Once we\nverify this works, I can restore the full authentication system\nwith the proper login form."}</Para>
      </Messages>
      <StatusBar><Text $s={17.700} $ls={0.2}>Agent is ready</Text></StatusBar>
      <Composer>
        <Placeholder $s={20.800} $ls={0.15}>Make anything...</Placeholder>
        <ComposerRow>
          <BuildChip><Box size={23} strokeWidth={1.400} /><Text $s={18.500} $ls={0.1}>Build</Text><Gap $w={2} /><ChevronUp size={18} strokeWidth={1.500} /></BuildChip>
          <Gap $w={4} /><Slot $w={42}><SelectIcon /></Slot><Slot $w={42}><ImageIcon size={25} strokeWidth={1.400} /></Slot>
          <Gap $w={293} /><Slot $w={48}><SlidersIcon /></Slot><Slot $w={49} $c="#9a9da7"><ArrowUp size={24} strokeWidth={1.500} /></Slot>
        </ComposerRow>
      </Composer>
    </Chat>
  </Pane>
);

const PreviewPane = () => (
  <Pane $w={1182}>
    <PaneTabs>
      <PaneTab $w={157} $on><Monitor size={25} strokeWidth={1.500} color="#c3c5cb" /><Text $s={20} $c="#fff">Preview</Text></PaneTab>
      <PaneTab $w={158}><Slot $w={24} $c="#5d5538"><TerminalIcon /></Slot><Text $s={20} $c="#71737e">Console</Text></PaneTab>
      <Slot $w={48} $c="#b4b6bd"><Plus size={19} strokeWidth={1.500} /></Slot>
      <Gap $w={772} /><Slot $w={42} $c="#b4b6bd"><EllipsisVertical size={23} /></Slot>
    </PaneTabs>
    <PreviewBar>
      <Slot $w={42}><ArrowLeft size={22} strokeWidth={1.500} /></Slot><Slot $w={42}><ArrowRight size={22} strokeWidth={1.500} /></Slot><Slot $w={44} $c="#fff"><RotateCw size={25} strokeWidth={1.500} /></Slot>
      <Gap $w={1} /><PreviewUrl><Link size={18} strokeWidth={1.500} /><Text $s={20} $ls={0}>.replit.dev<Text as="span" $s={20} $c="#e4e6ea">/</Text></Text></PreviewUrl>
      <Slot $w={36}><MonitorSmartphone size={24} strokeWidth={1.400} /></Slot><Gap $w={4} /><Slot $w={36}><Palette size={24} strokeWidth={1.400} /></Slot>
      <Gap $w={6} /><Text $s={20.500} $ls={0.5}>Theme</Text><Gap $w={12} />
      <Slot $w={34}><Wrench size={24} strokeWidth={1.400} /></Slot><Gap $w={2} /><Slot $w={38}><ExternalLink size={24} strokeWidth={1.400} /></Slot>
    </PreviewBar>
    <Frame><Brand>Artisanal Jewels</Brand><PageName $s={36} $mt={18}>Home Page</PageName><PageName $s={24} $mt={45}>React app is working!</PageName></Frame>
  </Pane>
);

export default function App() {
  return (
    <Screen>
      <Global />
      <BrowserChrome />
      <Ide>
        <IdeHeader>
          <Slot $w={72} $c="#c3c5cb"><House size={25} strokeWidth={1.400} /></Slot>
          <AppIcon><ExternalLink size={19} strokeWidth={1.800} /></AppIcon>
          <ProjectName as="div" $s={20.200} $ls={0.42}>ArtisanalJewels</ProjectName>
          <RunGroup><Slot $w={41}><AgentMark /></Slot><RunLabel><Text $s={20} $ls={0.15} $weight={700}>Running</Text></RunLabel></RunGroup>
          <Gap $w={412} /><Slot $w={50}><Search size={24} strokeWidth={1.500} /></Slot><Gap $w={8} />
          <HeaderButton $w={116} $gap={12}><InviteIcon /><Text $s={20.500} $ls={0.7}>Invite</Text></HeaderButton>
          <HeaderButton $w={128} $gap={12}><DeployIcon s={26} /><Text $s={20.500} $ls={0.45}>Deploy</Text></HeaderButton>
          <Slot $w={48}><Bell size={24} strokeWidth={1.400} /></Slot><Gap $w={22} />
          <Avatar><Text $s={14} $c="#a3a6af">DS</Text></Avatar><Slot $w={24} $c="#a3a6af"><ChevronDown size={18} strokeWidth={1.500} /></Slot>
        </IdeHeader>
        <IdeBody><SideRail /><AgentPane /><Splitter /><PreviewPane /></IdeBody>
      </Ide>
      <Assistant>
        <svg width="96" height="54" viewBox="0 0 96 54">
          <ellipse cx="27" cy="27" rx="20" ry="21" fill="#f7f8ff" />
          <path fill="#06907d" d="M27 15a10 10 0 0 1 6 18l-1.500 3h-9L21 33a10 10 0 0 1 6-18z" /><path fill="#fff" d="M27 19l1.500 4.500L33 25l-4.500 1.500L27 31l-1.500-4.500L21 25l4.500-1.500z" /><path stroke="#06907d" strokeWidth="2" d="M22 37h10M24 40h6" />
          <path fill="#06806f" d="M69 6a21 21 0 1 1 0 42H48V27A21 21 0 0 1 69 6z" /><path d="M81 20a14 14 0 1 0 1.500 7.500h-11M82 27.500c0 3-1 5-3 7" fill="none" stroke="#fff" strokeWidth="3.500" />
          <g fill="#777"><circle cx="4" cy="43" r="1" /><circle cx="8" cy="43" r="1" /><circle cx="4" cy="47" r="1" /><circle cx="8" cy="47" r="1" /><circle cx="4" cy="51" r="1" /><circle cx="8" cy="51" r="1" /></g>
        </svg>
      </Assistant>
      <Taskbar>
        <Weather><svg width="48" height="44" viewBox="0 0 48 44"><path fill="#e45d06" d="M23 6q3 0 4.500 3L40 36q1 4-3 4H8q-4 0-3-4L19 9q1.500-3 4-3z" /><path stroke="#fff" strokeWidth="1.500" d="M17 24v9M13 26l8 5M21 26l-8 5" /><path d="M24 22a2 2 0 0 1 4 0v8a4 4 0 1 1-4 0z" fill="#e45d06" stroke="#fff" strokeWidth="1.500" /><path d="M26 18v8" stroke="#fff" strokeWidth="2.500" /></svg><Badge>4</Badge></Weather>
        <Gap $w={370} /><Windows /><Gap $w={20} />
        <SearchPill><svg width="25" height="26" viewBox="0 0 25 26" fill="none" stroke="#e6e9ee" strokeWidth="2.600" strokeLinecap="round"><circle cx="11.500" cy="11" r="8.800" /><path d="M18 17.500l5 5.500" /></svg><Text $s={19.500} $ls={-0.1}>Search</Text></SearchPill>
        <Gap $w={3} />
        <TaskButton><TaskView /></TaskButton><TaskButton><Copilot id="cb" s={33} /></TaskButton><TaskButton><Paint /></TaskButton><TaskButton><Teams /></TaskButton><TaskButton><Brave /></TaskButton><TaskButton><Chrome /></TaskButton><TaskButton><Explorer /></TaskButton>
        <TaskButton $on><Edge /></TaskButton><TaskButton $dot><VsCode /></TaskButton><TaskButton $dot><UTorrent /></TaskButton>
        <Tray>
          <ChevronUp size={26} strokeWidth={1.800} />
          <DropboxSlot><svg width="22" height="18" viewBox="0 0 22 18" fill="#fff"><path d="M5.500 0L11 3.500 5.500 7 0 3.500zM16.500 0L22 3.500 16.500 7 11 3.500zM16.500 7.500L22 11l-5.500 3.500L12 11zM14 14l3 1.500-3 1.500z" /></svg><DropboxBadge>7</DropboxBadge></DropboxSlot>
          <Slot $w={36}><svg width="24" height="18" viewBox="0 0 24 18" fill="none" stroke="#fff" strokeWidth="1.800" strokeLinecap="round"><path d="M1 6.500a15.500 15.500 0 0 1 22 0M4.500 10a10.500 10.500 0 0 1 15 0M8 13.300a5.700 5.700 0 0 1 8 0" /><circle cx="12" cy="15.800" r="1.300" fill="#fff" /></svg></Slot>
          <Slot $w={36}><svg width="25" height="20" viewBox="0 0 25 20" fill="none" stroke="#fff" strokeWidth="1.600" strokeLinejoin="round" strokeLinecap="round"><path d="M1 6.500h4L10.500 1.500v17L5 13.500H1zM14 7q2 3 0 6M17.500 4q4 6 0 12M20.500 1.500q6.500 8.500 0 17" /></svg></Slot>
          <Slot $w={35}><svg width="25" height="24" viewBox="0 -2 25 24"><rect x="2" y="2" width="19" height="14" rx="3" fill="none" stroke="#fff" strokeWidth="1.600" /><rect x="4.500" y="4.500" width="14" height="9" rx="1" fill="#fff" /><path d="M22 6.500h2v5h-2z" fill="#fff" /><path d="M5-2L0 5h3l-1 5 6-8H5z" fill="#fff" stroke="#421b20" strokeWidth="1" /></svg></Slot>
          <Clock>4:07 PM<br />9/4/2025</Clock>
        </Tray>
      </Taskbar>
    </Screen>
  );
}
